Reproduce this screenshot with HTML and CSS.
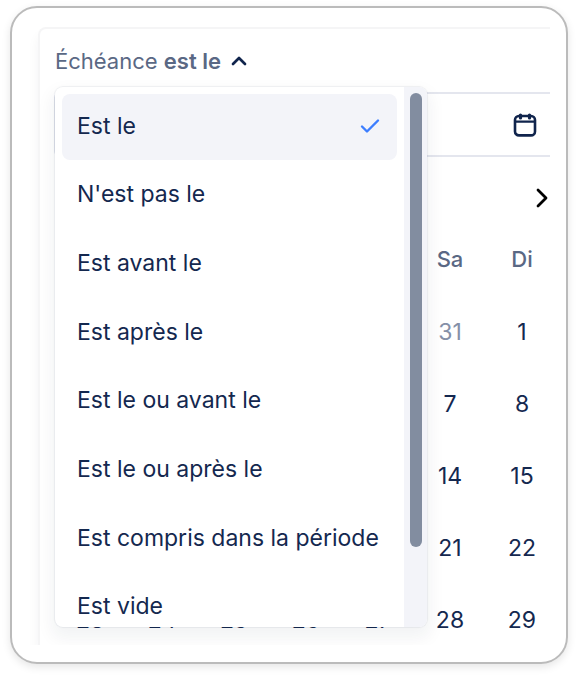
FILE: index.html
```html
<!DOCTYPE html>
<html lang="fr">
<head>
    <meta charset="UTF-8">
    <meta name="viewport" content="width=device-width, initial-scale=1.0">
    <title>Échéance</title>
    <link rel="stylesheet" href="styles.css">
</head>
<body>
    <main class="card">
        <div class="viewport">
            <section class="panel">
                <!-- Filter trigger -->
                <button type="button" class="trigger" aria-haspopup="listbox" aria-expanded="true">
                    <span>Échéance <b>est le</b></span>
                    <svg width="16" height="10" viewBox="0 0 16 10" fill="none" stroke="#10244c" stroke-width="2.7" stroke-linecap="round" stroke-linejoin="round"><path d="M2 8l6-6 6 6"/></svg>
                </button>

                <!-- Date field -->
                <div class="field">
                    <input type="text" aria-label="Date">
                    <button type="button" class="icon-button" aria-label="Ouvrir le calendrier">
                        <svg width="24" height="24" viewBox="0 0 24 24" fill="none" stroke="#10244c" stroke-width="2.6" stroke-linecap="round"><rect x="2" y="3" width="20" height="19.4" rx="4"/><path d="M2.5 8.6h19" stroke-width="2.2"/><path d="M7.5 2v3M16.5 2v3" stroke-width="3.2"/></svg>
                    </button>
                </div>

                <!-- Calendar -->
                <div class="month-nav">
                    <button type="button" class="icon-button" aria-label="Mois suivant">
                        <svg width="14" height="20" viewBox="0 0 14 20" fill="none" stroke="#000" stroke-width="2.8" stroke-linecap="round" stroke-linejoin="round"><path d="M3 2l8 8-8 8"/></svg>
                    </button>
                </div>
                <table class="calendar">
                    <thead>
                        <tr><th></th><th></th><th></th><th></th><th></th><th>Sa</th><th>Di</th></tr>
                    </thead>
                    <tbody>
                        <tr><td colspan="5"></td><td class="outside">31</td><td>1</td></tr>
                        <tr><td colspan="5"></td><td>7</td><td>8</td></tr>
                        <tr><td colspan="5"></td><td>14</td><td>15</td></tr>
                        <tr><td colspan="5"></td><td>21</td><td>22</td></tr>
                        <tr><td>23</td><td>24</td><td>25</td><td>26</td><td>27</td><td>28</td><td>29</td></tr>
                    </tbody>
                </table>

                <!-- Condition menu -->
                <div class="menu">
                    <div class="options" role="listbox" aria-label="Condition">
                        <button type="button" class="option selected" role="option" aria-selected="true">
                            Est le
                            <svg width="20" height="16" viewBox="0 0 20 16" fill="none" stroke="#3d7eff" stroke-width="2.4" stroke-linecap="round" stroke-linejoin="round"><path d="M2 8.5L7 13.5 18 2.5"/></svg>
                        </button>
                        <button type="button" class="option" role="option">N'est pas le</button>
                        <button type="button" class="option" role="option">Est avant le</button>
                        <button type="button" class="option" role="option">Est après le</button>
                        <button type="button" class="option" role="option">Est le ou avant le</button>
                        <button type="button" class="option" role="option">Est le ou après le</button>
                        <button type="button" class="option" role="option">Est compris dans la période</button>
                        <button type="button" class="option" role="option">Est vide</button>
                    </div>
                    <div class="scrollbar"><div class="thumb"></div></div>
                </div>
            </section>
        </div>
    </main>
</body>
</html>
```
FILE: styles.css
```css
* {
    box-sizing: border-box;
}
body {
    margin: 0;
    padding: 6px 10px 14px;
    background-color: #fff;
    font-family: Inter, "Liberation Sans", sans-serif;
    font-size: 23px;
    color: #14284f;
}
button, input {
    font: inherit;
    color: inherit;
    border: none;
    background: none;
    padding: 0;
}
button {
    cursor: pointer;
}
svg {
    display: block;
    flex: none;
}
.card {
    padding: 19px 16px 17px;
    border: 2px solid #bbb;
    border-radius: 27px;
    box-shadow: 0 3px 8px rgba(0, 0, 0, 0.1);
}
.viewport {
    overflow: hidden;
    padding-left: 10px;
}
.panel {
    position: relative;
    width: 540px;
    height: 618px;
    padding: 0 14px;
    border: 2px solid #f5f5f6;
    border-radius: 8px 0 0 0;
    border-bottom: none;
    box-shadow: 0 8px 12px rgba(9, 30, 66, 0.05);
}
.trigger {
    display: flex;
    align-items: center;
    gap: 10px;
    height: 63px;
    padding-left: 1px;
    font-size: 22px;
    color: #5a6884;
}
.trigger b {
    font-weight: 600;
}
.field {
    display: flex;
    align-items: center;
    height: 65px;
    padding-right: 23px;
    border: 2px solid #e4e6ee;
    border-radius: 6px;
}
.field input {
    flex: 1;
    min-width: 0;
}
.month-nav {
    display: flex;
    align-items: center;
    justify-content: flex-end;
    height: 82px;
    padding-right: 13px;
}
.calendar {
    width: 504px;
    table-layout: fixed;
    border-collapse: collapse;
    text-align: center;
}
.calendar th {
    height: 40px;
    padding: 0;
    font-size: 22px;
    font-weight: 500;
    color: #5a6884;
}
.calendar td {
    height: 72px;
    padding: 0;
}
.calendar thead::after {
    content: "";
    display: block;
    height: 17px;
}
.calendar .outside {
    color: #8590a8;
}
.menu {
    position: absolute;
    top: 58px;
    left: 15px;
    display: flex;
    width: 372px;
    height: 540px;
    overflow: hidden;
    background-color: #fff;
    border-radius: 8px;
    box-shadow: 0 0 1px 1px rgba(9, 30, 66, 0.06), 0 8px 16px 4px rgba(9, 30, 66, 0.05);
}
.options {
    flex: 1;
    display: grid;
    grid-auto-rows: 1fr;
    gap: 3px;
    height: 560px;
    padding: 7px 7px 7px;
}
.option {
    display: flex;
    align-items: center;
    justify-content: space-between;
    padding: 0 17px 2px 15px;
    border-radius: 8px;
    text-align: left;
    white-space: nowrap;
}
.option.selected {
    background-color: #f3f4f9;
}
.scrollbar {
    width: 23px;
    padding: 6px 5px 6px 6px;
    background-color: #f3f4f9;
}
.thumb {
    height: 86%;
    border-radius: 6px;
    background-color: #828da0;
}
```
